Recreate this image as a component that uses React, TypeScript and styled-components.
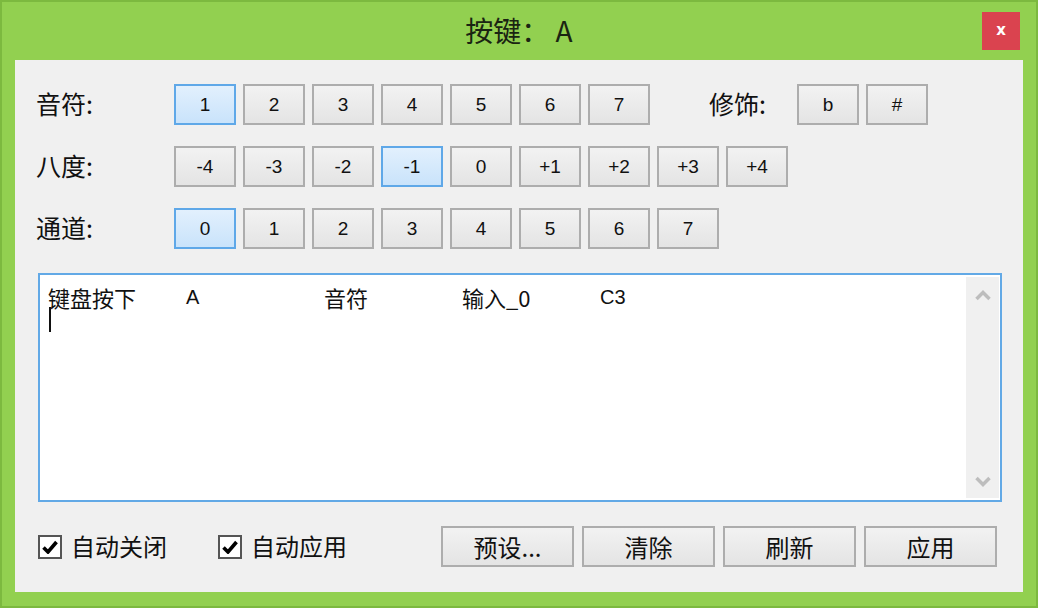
import React from "react";
import styled, { createGlobalStyle, css } from "styled-components";

const Global = createGlobalStyle`
  html, body { margin: 0; padding: 0; background: #92d050; }
  body { font-family: "Noto Sans CJK SC", "Liberation Sans", sans-serif; }
  * { box-sizing: border-box; }
`;

const Frame = styled.div`
  width: 1038px;
  height: 608px;
  background: #92d050;
  border: 2px solid #7cb93f;
  display: flex;
  flex-direction: column;
`;

const TitleBar = styled.div`
  height: 58px;
  display: grid;
  grid-template-columns: 1fr auto 1fr;
  align-items: center;
`;

const Title = styled.div`
  grid-column: 2;
  font-family: "Noto Sans CJK SC", sans-serif;
  font-size: 28px;
  color: #1a2412;
  padding-bottom: 2px;
`;

const CloseButton = styled.button`
  grid-column: 3;
  justify-self: end;
  margin-right: 16px;
  width: 38px;
  height: 38px;
  border: none;
  background: #da434f;
  color: #fff;
  font-family: "DejaVu Sans", sans-serif;
  font-weight: bold;
  font-size: 15px;
  padding: 0 0 3px;
  cursor: pointer;
`;

const Panel = styled.div`
  margin: 0 13px 14px;
  height: 532px;
  background: #f0f0f0;
  padding: 24px 21px 0 21px;
  display: flex;
  flex-direction: column;
`;

const Rows = styled.div`
  display: flex;
  flex-direction: column;
  gap: 21px;
`;

const Row = styled.div`
  display: flex;
  align-items: center;
  height: 41px;
`;

const Label = styled.div<{ $width: number; $offset?: number }>`
  width: ${(p) => p.$width}px;
  margin-left: ${(p) => p.$offset ?? 0}px;
  font-family: "Noto Sans CJK SC", sans-serif;
  font-size: 25px;
  color: #111;
  padding-bottom: 3px;
  white-space: nowrap;
`;

const BtnGroup = styled.div`
  display: flex;
  gap: 7px;
`;

const KeyBtn = styled.button<{ $active?: boolean; $wide?: boolean }>`
  width: ${(p) => (p.$wide ? 133 : 62)}px;
  height: 41px;
  padding: 0;
  border: 2px solid #adadad;
  background: linear-gradient(#f2f2f2, #e4e4e4);
  color: #111;
  font-family: ${(p) => (p.$wide ? `"Noto Sans CJK SC", sans-serif` : `"Liberation Sans", "DejaVu Sans", sans-serif`)};
  font-size: ${(p) => (p.$wide ? 24 : 19)}px;
  line-height: 1;
  cursor: pointer;
  ${(p) =>
    p.$active &&
    css`
      border-color: #5fa8e8;
      background: linear-gradient(#e2f0fd, #c9e3fb);
    `}
`;

const TextBox = styled.div`
  margin: 24px 0 0 2px;
  height: 229px;
  border: 2px solid #62a9e6;
  background: #fff;
  display: flex;
`;

const TextContent = styled.div`
  flex: 1;
  padding: 6px 0 0 8px;
`;

const LogLine = styled.div`
  display: grid;
  grid-template-columns: repeat(5, 138px);
  height: 24px;
  align-items: center;
`;

const Cell = styled.span<{ $latin?: boolean }>`
  font-family: ${(p) => (p.$latin ? `"Liberation Sans", sans-serif` : `"Noto Sans CJK SC", sans-serif`)};
  font-size: ${(p) => (p.$latin ? 20 : 22)}px;
  color: #111;
  white-space: nowrap;
`;

const Caret = styled.div`
  width: 2px;
  height: 25px;
  margin: 2px 0 0 1px;
  background: #111;
`;

const ScrollBar = styled.div`
  width: 33px;
  margin: 2px 1px 2px 0;
  background: #f0f0f0;
  display: flex;
  flex-direction: column;
  justify-content: space-between;
  align-items: center;
  padding: 12px 0 10px;
`;

const Footer = styled.div`
  margin: 24px 5px 0 2px;
  height: 41px;
  display: flex;
  align-items: center;
`;

const CheckItem = styled.label<{ $width?: number }>`
  display: flex;
  align-items: center;
  gap: 9px;
  width: ${(p) => p.$width ?? 0}px;
  font-family: "Noto Sans CJK SC", sans-serif;
  font-size: 24px;
  color: #111;
`;

const CheckBox = styled.span`
  width: 24px;
  height: 24px;
  border: 2px solid #555;
  background: #fff;
  display: flex;
  align-items: center;
  justify-content: center;
`;

const CheckText = styled.span`
  padding-bottom: 3px;
`;

const Actions = styled.div`
  margin-left: auto;
  display: flex;
  gap: 8px;
`;

const Chevron = ({ up }: { up?: boolean }) => (
  <svg width="18" height="12" viewBox="0 0 18 12">
    <path
      d={up ? "M2.5 10 L9 3.5 L15.5 10" : "M2.5 2 L9 8.5 L15.5 2"}
      fill="none"
      stroke="#bdbdbd"
      strokeWidth="3.5"
    />
  </svg>
);

const Check = () => (
  <svg width="16" height="14" viewBox="0 0 16 14">
    <path d="M1.5 7.5 L6 12 L14.5 2" fill="none" stroke="#000" strokeWidth="3.6" />
  </svg>
);

const notes = ["1", "2", "3", "4", "5", "6", "7"];
const octaves = ["-4", "-3", "-2", "-1", "0", "+1", "+2", "+3", "+4"];
const channels = ["0", "1", "2", "3", "4", "5", "6", "7"];

export default function App() {
  return (
    <>
      <Global />
      <Frame>
        <TitleBar>
          <Title>按键： A</Title>
          <CloseButton>x</CloseButton>
        </TitleBar>
        <Panel>
          <Rows>
            <Row>
              <Label $width={138}>音符:</Label>
              <BtnGroup>
                {notes.map((n) => (
                  <KeyBtn key={n} $active={n === "1"}>
                    {n}
                  </KeyBtn>
                ))}
              </BtnGroup>
              <Label $width={88} $offset={59}>
                修饰:
              </Label>
              <BtnGroup>
                <KeyBtn>b</KeyBtn>
                <KeyBtn>#</KeyBtn>
              </BtnGroup>
            </Row>
            <Row>
              <Label $width={138}>八度:</Label>
              <BtnGroup>
                {octaves.map((o) => (
                  <KeyBtn key={o} $active={o === "-1"}>
                    {o}
                  </KeyBtn>
                ))}
              </BtnGroup>
            </Row>
            <Row>
              <Label $width={138}>通道:</Label>
              <BtnGroup>
                {channels.map((c) => (
                  <KeyBtn key={c} $active={c === "0"}>
                    {c}
                  </KeyBtn>
                ))}
              </BtnGroup>
            </Row>
          </Rows>
          <TextBox>
            <TextContent>
              <LogLine>
                <Cell>键盘按下</Cell>
                <Cell $latin>A</Cell>
                <Cell>音符</Cell>
                <Cell>输入_0</Cell>
                <Cell $latin>C3</Cell>
              </LogLine>
              <Caret />
            </TextContent>
            <ScrollBar>
              <Chevron up />
              <Chevron />
            </ScrollBar>
          </TextBox>
          <Footer>
            <CheckItem $width={180}>
              <CheckBox>
                <Check />
              </CheckBox>
              <CheckText>自动关闭</CheckText>
            </CheckItem>
            <CheckItem $width={180}>
              <CheckBox>
                <Check />
              </CheckBox>
              <CheckText>自动应用</CheckText>
            </CheckItem>
            <Actions>
              <KeyBtn $wide>预设...</KeyBtn>
              <KeyBtn $wide>清除</KeyBtn>
              <KeyBtn $wide>刷新</KeyBtn>
              <KeyBtn $wide>应用</KeyBtn>
            </Actions>
          </Footer>
        </Panel>
      </Frame>
    </>
  );
}
